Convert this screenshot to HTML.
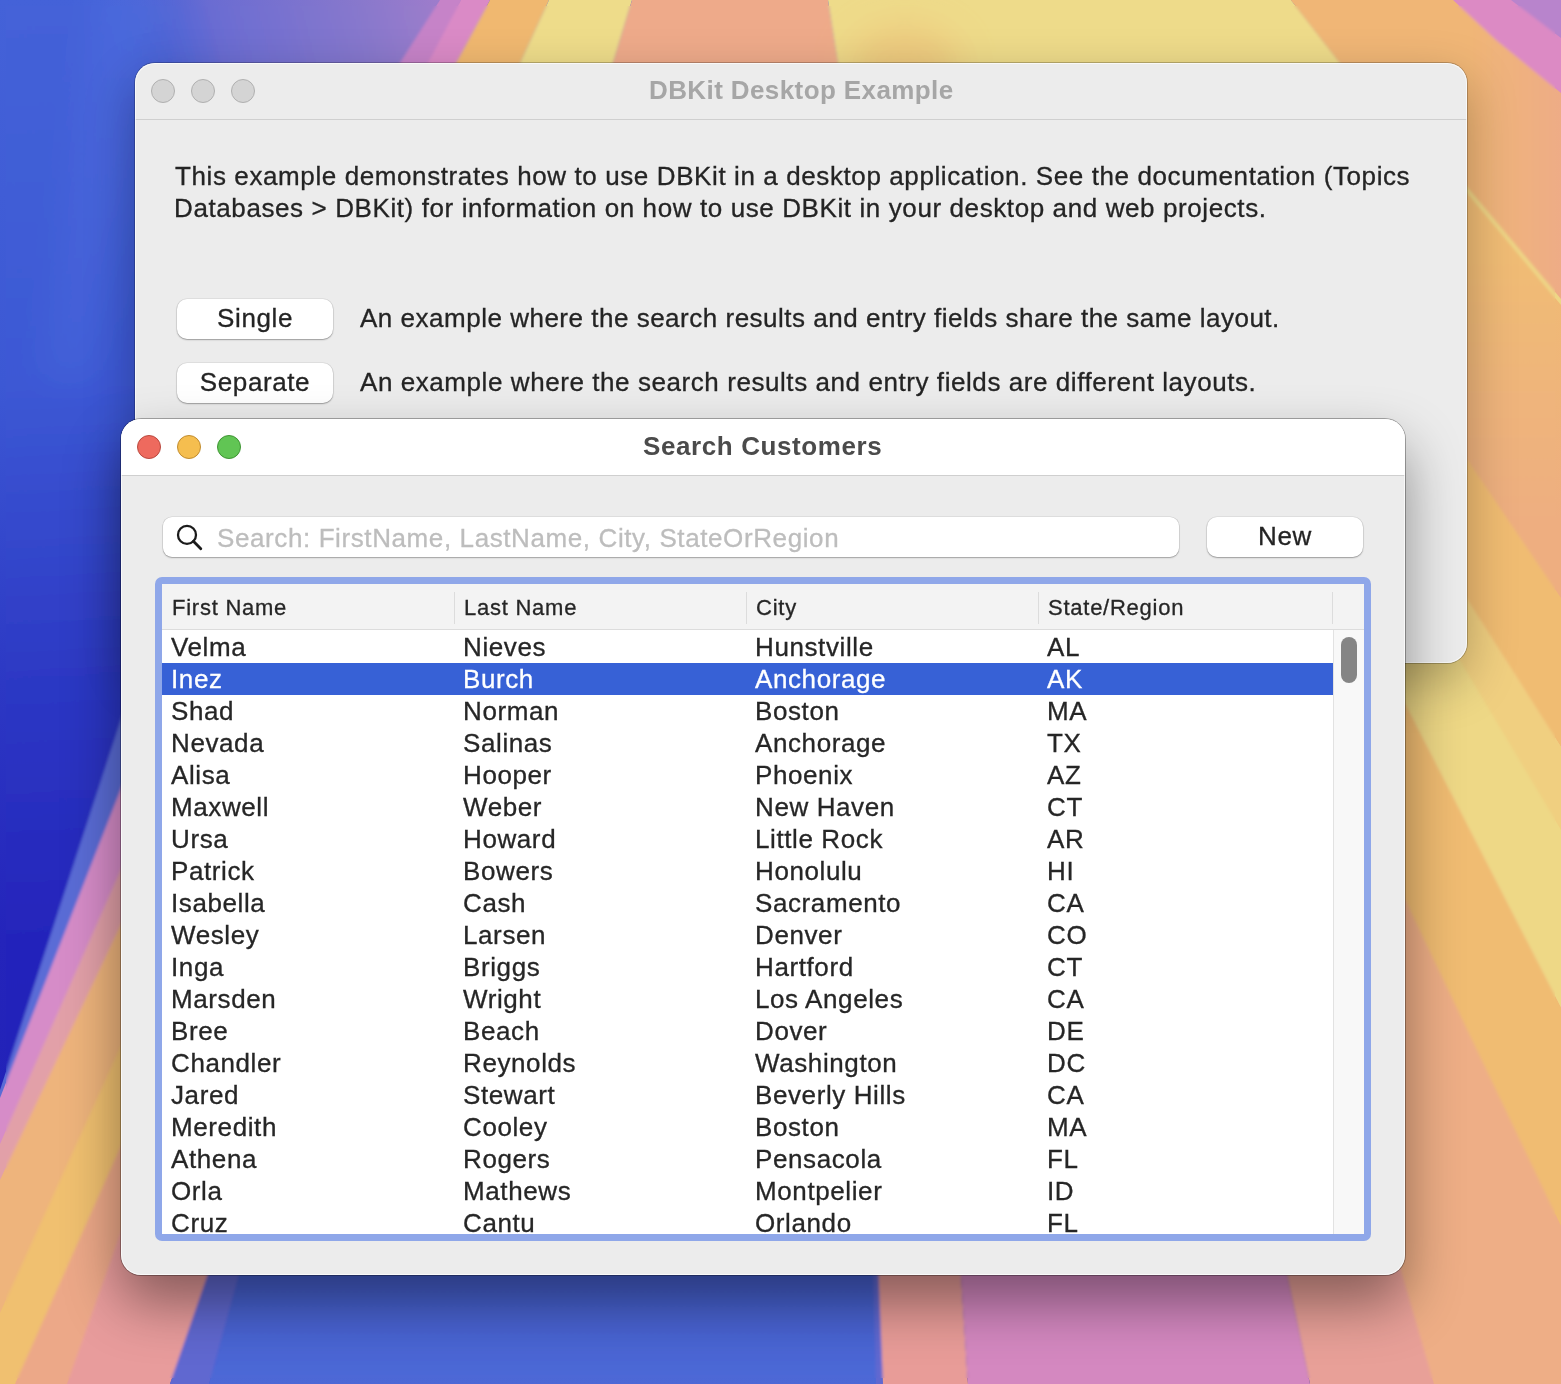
<!DOCTYPE html>
<html><head><meta charset="utf-8"><style>
html,body{margin:0;padding:0;}
body{width:1561px;height:1384px;overflow:hidden;position:relative;font-family:"Liberation Sans",sans-serif;}
.wall{position:absolute;left:0;top:0;}
.t{position:absolute;white-space:pre;will-change:transform;-webkit-text-stroke:0.3px currentColor;}
.win{position:absolute;border-radius:20px;background:#ececec;}
.back{box-shadow:0 0 0 1px rgba(0,0,0,0.22),0 18px 50px rgba(0,0,0,0.28);}
.front{background:#ececec;box-shadow:0 0 0 1px rgba(0,0,0,0.30),0 28px 56px rgba(0,0,0,0.42);overflow:hidden;}
.tbar{position:absolute;left:0;top:0;right:0;height:56px;background:#ffffff;}
.sep{position:absolute;left:0;right:0;height:1px;background:#cfcfcf;}
.tl{position:absolute;width:22px;height:22px;border-radius:50%;border:1px solid #b0b0b0;background:#d4d4d4;}
.btn{position:absolute;background:#ffffff;border-radius:10px;box-shadow:0 0 0 0.6px rgba(0,0,0,0.10),0 1px 1.5px rgba(0,0,0,0.30);}
.field{position:absolute;background:#ffffff;border-radius:9px;box-shadow:0 0 0 0.6px rgba(0,0,0,0.12),0 1px 1.5px rgba(0,0,0,0.28);}
.ring{position:absolute;border-radius:7px;background:#8fa7e9;}
.table{position:absolute;background:#ffffff;overflow:hidden;}
.hdr{position:absolute;left:0;top:0;right:0;height:45px;background:#f3f3f3;border-bottom:1px solid #dcdcdc;}
.csep{position:absolute;top:8px;width:1px;height:32px;background:#dcdcdc;}
.track{position:absolute;left:1171px;top:46px;width:31px;bottom:0;background:#f8f8f8;border-left:1px solid #e2e2e2;}
.thumb{position:absolute;left:1179px;top:53px;width:16px;height:46px;border-radius:8px;background:#858585;}
.selrow{position:absolute;left:0;width:1171px;height:32px;background:#3761d6;}
.clip{position:absolute;overflow:hidden;}
.rim{position:absolute;left:0;top:0;right:0;bottom:0;border-radius:20px;box-shadow:inset 0 0 0 1px rgba(255,255,255,0.7);}
</style></head>
<body>
<svg class="wall" width="1561" height="1384" viewBox="0 0 1561 1384"><defs><linearGradient id="gBlue" gradientUnits="userSpaceOnUse" x1="0" y1="0" x2="60" y2="1100"><stop offset="0" stop-color="#4462d8"/><stop offset="0.35" stop-color="#3c58d4"/><stop offset="0.62" stop-color="#2c38c4"/><stop offset="0.85" stop-color="#2424bb"/><stop offset="1" stop-color="#2222b8"/></linearGradient><linearGradient id="gPurp" gradientUnits="userSpaceOnUse" x1="120" y1="90" x2="470" y2="0"><stop offset="0" stop-color="#4a64d6" stop-opacity="0"/><stop offset="0.3" stop-color="#6a6cd2"/><stop offset="0.7" stop-color="#8878cc"/><stop offset="1" stop-color="#a67ecb"/></linearGradient><linearGradient id="gBot" gradientUnits="userSpaceOnUse" x1="0" y1="1275" x2="0" y2="1384"><stop offset="0" stop-color="#4560d0"/><stop offset="1" stop-color="#4d68d6"/></linearGradient><linearGradient id="gRS" gradientUnits="userSpaceOnUse" x1="1467" y1="0" x2="1561" y2="0"><stop offset="0" stop-color="#f0b676"/><stop offset="1" stop-color="#eeac86"/></linearGradient><linearGradient id="gRS2" gradientUnits="userSpaceOnUse" x1="0" y1="250" x2="0" y2="520"><stop offset="0" stop-color="#f0bc74"/><stop offset="1" stop-color="#eeae80"/></linearGradient><filter id="soft" x="-2%" y="-2%" width="104%" height="104%"><feGaussianBlur stdDeviation="1.6"/></filter><filter id="big" x="-50%" y="-50%" width="200%" height="200%"><feGaussianBlur stdDeviation="18"/></filter></defs><rect x="-40" y="-40" width="1641" height="1464" fill="url(#gBlue)"/><polygon points="100,0 480,0 400,110 135,110" fill="url(#gPurp)" />
<polygon points="440,0 461,0 406.8730158730159,110 370.1587301587302,110" fill="#c683c8" />
<polygon points="461,0 490,0 430.6349206349206,110 403.3809523809524,110" fill="#da8ac6" />
<polygon points="490,0 549,0 498.3650793650794,110 430.6349206349206,110" fill="#f0b870" />
<polygon points="549,0 632,0 598.8253968253969,110 498.3650793650794,110" fill="#eedc8a" />
<polygon points="632,0 828,0 845.4603174603175,110 598.8253968253969,110" fill="#eeaa8a" />
<polygon points="828,0 1291,0 1376.5555555555557,110 845.4603174603175,110" fill="#eedb8a" />
<ellipse cx="905" cy="66" rx="55" ry="40" fill="#ecc47a" opacity="0.8" filter="url(#big)"/><polygon points="95,-20 160,-20 95,380 40,380" fill="#6080e8" opacity="0.2" filter="url(#big)"/><polygon points="1291,0 1453,0 1568.2380952380952,110 1376.5555555555557,110" fill="#f0b874" />
<polygon points="1400,0 1561,0 1561,1384 1400,1384" fill="#eeae86" />
<polygon points="1291,0 1561,0 1561,302 1400,110 1340,63" fill="url(#gRS)" />
<polygon points="1453,0 1600,0 1600,125 1561,93 1496,40" fill="#dc8ac4" />
<polygon points="1511,0 1600,0 1600,60 1561,38" fill="#b884cc" />
<polygon points="1400,110 1561,302 1561,598 1400,360" fill="url(#gRS2)" />
<polygon points="1400,107 1561,299 1561,305 1400,113" fill="#eed686" />
<polygon points="1400,360 1561,598 1561,747 1400,494" fill="#f0bc72" />
<polygon points="1400,494 1561,747 1561,1008 1400,694" fill="#eed886" />
<polygon points="1400,494 1561,747 1561,830 1400,560" fill="#f0cf80" />
<polygon points="1400,694 1561,1008 1561,1226 1400,889" fill="#f0bc72" />
<polygon points="1400,1260 1435,1384 1400,1384" fill="#e8a098" />
<polygon points="243,1260 880,1260 883,1384 209,1384" fill="url(#gBot)" />
<polygon points="213,1260 243,1260 209,1384 170,1384" fill="#6068d0" />
<polygon points="873,1260 880,1260 883,1384 876,1384" fill="#6068d0" />
<polygon points="878,1260 960,1260 968,1384 883,1384" fill="#e89c98" />
<polygon points="960,1260 1284,1260 1310,1384 968,1384" fill="#d488c0" />
<polygon points="1284,1260 1398,1260 1434,1384 1310,1384" fill="#e8a098" />
<polygon points="1398,1260 1561,1260 1561,1384 1434,1384" fill="#eeae86" />
<polygon points="140,661 140,1384 0,1384 0,1090" fill="#5a6cd6" />
<polygon points="140,740 140,1384 0,1384 0,1098" fill="#d68cc8" />
<polygon points="140,826 140,1384 0,1384 0,1144" fill="#e2a0a8" />
<polygon points="140,884 140,1384 0,1384 0,1180" fill="#eeb47c" />
<polygon points="140,1004 140,1384 0,1384 0,1313" fill="#f0c070" />
<polygon points="140,1103 140,1384 15,1384" fill="#eca888" />
<polygon points="150,1150 251,1150 170,1384 67,1384" fill="#e89c9c" />
<polygon points="213,1260 243,1260 209,1384 170,1384" fill="#6068d0" />
<polygon points="243,1260 300,1260 300,1384 209,1384" fill="url(#gBot)" />
<clipPath id="inset"><rect x="6" y="6" width="1549" height="1372"/></clipPath><g clip-path="url(#inset)"><g filter="url(#soft)"><rect x="-40" y="-40" width="1641" height="1464" fill="url(#gBlue)"/><polygon points="100,0 480,0 400,110 135,110" fill="url(#gPurp)" />
<polygon points="440,0 461,0 406.8730158730159,110 370.1587301587302,110" fill="#c683c8" />
<polygon points="461,0 490,0 430.6349206349206,110 403.3809523809524,110" fill="#da8ac6" />
<polygon points="490,0 549,0 498.3650793650794,110 430.6349206349206,110" fill="#f0b870" />
<polygon points="549,0 632,0 598.8253968253969,110 498.3650793650794,110" fill="#eedc8a" />
<polygon points="632,0 828,0 845.4603174603175,110 598.8253968253969,110" fill="#eeaa8a" />
<polygon points="828,0 1291,0 1376.5555555555557,110 845.4603174603175,110" fill="#eedb8a" />
<ellipse cx="905" cy="66" rx="55" ry="40" fill="#ecc47a" opacity="0.8" filter="url(#big)"/><polygon points="95,-20 160,-20 95,380 40,380" fill="#6080e8" opacity="0.2" filter="url(#big)"/><polygon points="1291,0 1453,0 1568.2380952380952,110 1376.5555555555557,110" fill="#f0b874" />
<polygon points="1400,0 1561,0 1561,1384 1400,1384" fill="#eeae86" />
<polygon points="1291,0 1561,0 1561,302 1400,110 1340,63" fill="url(#gRS)" />
<polygon points="1453,0 1600,0 1600,125 1561,93 1496,40" fill="#dc8ac4" />
<polygon points="1511,0 1600,0 1600,60 1561,38" fill="#b884cc" />
<polygon points="1400,110 1561,302 1561,598 1400,360" fill="url(#gRS2)" />
<polygon points="1400,107 1561,299 1561,305 1400,113" fill="#eed686" />
<polygon points="1400,360 1561,598 1561,747 1400,494" fill="#f0bc72" />
<polygon points="1400,494 1561,747 1561,1008 1400,694" fill="#eed886" />
<polygon points="1400,494 1561,747 1561,830 1400,560" fill="#f0cf80" />
<polygon points="1400,694 1561,1008 1561,1226 1400,889" fill="#f0bc72" />
<polygon points="1400,1260 1435,1384 1400,1384" fill="#e8a098" />
<polygon points="243,1260 880,1260 883,1384 209,1384" fill="url(#gBot)" />
<polygon points="213,1260 243,1260 209,1384 170,1384" fill="#6068d0" />
<polygon points="873,1260 880,1260 883,1384 876,1384" fill="#6068d0" />
<polygon points="878,1260 960,1260 968,1384 883,1384" fill="#e89c98" />
<polygon points="960,1260 1284,1260 1310,1384 968,1384" fill="#d488c0" />
<polygon points="1284,1260 1398,1260 1434,1384 1310,1384" fill="#e8a098" />
<polygon points="1398,1260 1561,1260 1561,1384 1434,1384" fill="#eeae86" />
<polygon points="140,661 140,1384 0,1384 0,1090" fill="#5a6cd6" />
<polygon points="140,740 140,1384 0,1384 0,1098" fill="#d68cc8" />
<polygon points="140,826 140,1384 0,1384 0,1144" fill="#e2a0a8" />
<polygon points="140,884 140,1384 0,1384 0,1180" fill="#eeb47c" />
<polygon points="140,1004 140,1384 0,1384 0,1313" fill="#f0c070" />
<polygon points="140,1103 140,1384 15,1384" fill="#eca888" />
<polygon points="150,1150 251,1150 170,1384 67,1384" fill="#e89c9c" />
<polygon points="213,1260 243,1260 209,1384 170,1384" fill="#6068d0" />
<polygon points="243,1260 300,1260 300,1384 209,1384" fill="url(#gBot)" />
</g></g></svg>
<div class="win back" style="left:135px;top:63px;width:1332px;height:600px;"><div class="sep" style="top:56px"></div><div class="tl gray" style="left:16px;top:16px"></div><div class="tl gray" style="left:56px;top:16px"></div><div class="tl gray" style="left:96px;top:16px"></div><div class="rim"></div></div>
<div class="btn" style="left:177px;top:299px;width:156px;height:40px"></div><div class="btn" style="left:177px;top:363px;width:156px;height:40px"></div>
<div class="t" style="left:649px;top:73.69px;font-size:26px;line-height:32px;color:#a6a6a6;font-weight:700;letter-spacing:0.4px;-webkit-text-stroke:0;">DBKit Desktop Example</div>
<div class="t" style="left:175px;top:159.59px;font-size:26px;line-height:32px;color:#242424;font-weight:400;letter-spacing:0.6px;">This example demonstrates how to use DBKit in a desktop application. See the documentation (Topics</div>
<div class="t" style="left:174px;top:191.59px;font-size:26px;line-height:32px;color:#242424;font-weight:400;letter-spacing:0.6px;">Databases &gt; DBKit) for information on how to use DBKit in your desktop and web projects.</div>
<div class="t" style="left:177px;width:156px;text-align:center;top:301.99px;font-size:26px;line-height:32px;color:#242424;font-weight:400;letter-spacing:0.6px;">Single</div>
<div class="t" style="left:177px;width:156px;text-align:center;top:365.99px;font-size:26px;line-height:32px;color:#242424;font-weight:400;letter-spacing:0.6px;">Separate</div>
<div class="t" style="left:360px;top:301.99px;font-size:26px;line-height:32px;color:#242424;font-weight:400;letter-spacing:0.51px;">An example where the search results and entry fields share the same layout.</div>
<div class="t" style="left:360px;top:365.99px;font-size:26px;line-height:32px;color:#242424;font-weight:400;letter-spacing:0.57px;">An example where the search results and entry fields are different layouts.</div>

<div class="win front" style="left:121px;top:419px;width:1284px;height:856px;"><div class="tbar"></div><div class="sep" style="top:56px"></div><div class="tl" style="left:16px;top:16px;background:#ee6a5e;border-color:#b8493f"></div><div class="tl" style="left:56px;top:16px;background:#f5be4f;border-color:#c08c30"></div><div class="tl" style="left:96px;top:16px;background:#61c554;border-color:#3f9434"></div><div class="rim"></div></div>
<div class="t" style="left:643px;top:429.99px;font-size:26px;line-height:32px;color:#4b4b4b;font-weight:700;letter-spacing:0.6px;-webkit-text-stroke:0;">Search Customers</div>
<div class="field" style="left:163px;top:517px;width:1016px;height:40px"></div><svg style="position:absolute;left:170px;top:520px" width="40" height="36" viewBox="0 0 40 36"><circle cx="17" cy="14.9" r="9" fill="none" stroke="#1b1b1b" stroke-width="2.3"/><line x1="23.4" y1="21.3" x2="30.8" y2="28.8" stroke="#1b1b1b" stroke-width="2.8" stroke-linecap="round"/></svg><div class="t" style="left:217px;top:521.99px;font-size:26px;line-height:32px;color:#bdbdbd;font-weight:400;letter-spacing:0.6px;">Search: FirstName, LastName, City, StateOrRegion</div>
<div class="btn" style="left:1207px;top:517px;width:156px;height:40px"></div><div class="t" style="left:1207px;width:156px;text-align:center;top:519.99px;font-size:26px;line-height:32px;color:#242424;font-weight:400;letter-spacing:0.6px;">New</div>
<div class="ring" style="left:155px;top:577px;width:1216px;height:664px"></div><div class="table" style="left:162px;top:584px;width:1202px;height:650px"><div class="hdr"></div><div class="csep" style="left:292px"></div><div class="csep" style="left:584px"></div><div class="csep" style="left:876px"></div><div class="csep" style="left:1170px"></div><div class="track"></div><div class="thumb"></div><div class="selrow" style="top:79px"></div></div><div class="t" style="left:172px;top:591.88px;font-size:22px;line-height:32px;color:#262626;font-weight:400;letter-spacing:0.75px;">First Name</div>
<div class="t" style="left:464px;top:591.88px;font-size:22px;line-height:32px;color:#262626;font-weight:400;letter-spacing:0.75px;">Last Name</div>
<div class="t" style="left:756px;top:591.88px;font-size:22px;line-height:32px;color:#262626;font-weight:400;letter-spacing:0.75px;">City</div>
<div class="t" style="left:1048px;top:591.88px;font-size:22px;line-height:32px;color:#262626;font-weight:400;letter-spacing:0.75px;">State/Region</div>
<div class="clip" style="left:162px;top:630px;width:1171px;height:604px"><div class="t" style="left:9px;top:1.49px;font-size:26px;line-height:32px;color:#262626;font-weight:400;letter-spacing:0.6px;">Velma</div>
<div class="t" style="left:301px;top:1.49px;font-size:26px;line-height:32px;color:#262626;font-weight:400;letter-spacing:0.6px;">Nieves</div>
<div class="t" style="left:593px;top:1.49px;font-size:26px;line-height:32px;color:#262626;font-weight:400;letter-spacing:0.6px;">Hunstville</div>
<div class="t" style="left:885px;top:1.49px;font-size:26px;line-height:32px;color:#262626;font-weight:400;letter-spacing:0.6px;">AL</div>
<div class="t" style="left:9px;top:33.49px;font-size:26px;line-height:32px;color:#ffffff;font-weight:400;letter-spacing:0.6px;">Inez</div>
<div class="t" style="left:301px;top:33.49px;font-size:26px;line-height:32px;color:#ffffff;font-weight:400;letter-spacing:0.6px;">Burch</div>
<div class="t" style="left:593px;top:33.49px;font-size:26px;line-height:32px;color:#ffffff;font-weight:400;letter-spacing:0.6px;">Anchorage</div>
<div class="t" style="left:885px;top:33.49px;font-size:26px;line-height:32px;color:#ffffff;font-weight:400;letter-spacing:0.6px;">AK</div>
<div class="t" style="left:9px;top:65.49px;font-size:26px;line-height:32px;color:#262626;font-weight:400;letter-spacing:0.6px;">Shad</div>
<div class="t" style="left:301px;top:65.49px;font-size:26px;line-height:32px;color:#262626;font-weight:400;letter-spacing:0.6px;">Norman</div>
<div class="t" style="left:593px;top:65.49px;font-size:26px;line-height:32px;color:#262626;font-weight:400;letter-spacing:0.6px;">Boston</div>
<div class="t" style="left:885px;top:65.49px;font-size:26px;line-height:32px;color:#262626;font-weight:400;letter-spacing:0.6px;">MA</div>
<div class="t" style="left:9px;top:97.49px;font-size:26px;line-height:32px;color:#262626;font-weight:400;letter-spacing:0.6px;">Nevada</div>
<div class="t" style="left:301px;top:97.49px;font-size:26px;line-height:32px;color:#262626;font-weight:400;letter-spacing:0.6px;">Salinas</div>
<div class="t" style="left:593px;top:97.49px;font-size:26px;line-height:32px;color:#262626;font-weight:400;letter-spacing:0.6px;">Anchorage</div>
<div class="t" style="left:885px;top:97.49px;font-size:26px;line-height:32px;color:#262626;font-weight:400;letter-spacing:0.6px;">TX</div>
<div class="t" style="left:9px;top:129.49px;font-size:26px;line-height:32px;color:#262626;font-weight:400;letter-spacing:0.6px;">Alisa</div>
<div class="t" style="left:301px;top:129.49px;font-size:26px;line-height:32px;color:#262626;font-weight:400;letter-spacing:0.6px;">Hooper</div>
<div class="t" style="left:593px;top:129.49px;font-size:26px;line-height:32px;color:#262626;font-weight:400;letter-spacing:0.6px;">Phoenix</div>
<div class="t" style="left:885px;top:129.49px;font-size:26px;line-height:32px;color:#262626;font-weight:400;letter-spacing:0.6px;">AZ</div>
<div class="t" style="left:9px;top:161.49px;font-size:26px;line-height:32px;color:#262626;font-weight:400;letter-spacing:0.6px;">Maxwell</div>
<div class="t" style="left:301px;top:161.49px;font-size:26px;line-height:32px;color:#262626;font-weight:400;letter-spacing:0.6px;">Weber</div>
<div class="t" style="left:593px;top:161.49px;font-size:26px;line-height:32px;color:#262626;font-weight:400;letter-spacing:0.6px;">New Haven</div>
<div class="t" style="left:885px;top:161.49px;font-size:26px;line-height:32px;color:#262626;font-weight:400;letter-spacing:0.6px;">CT</div>
<div class="t" style="left:9px;top:193.49px;font-size:26px;line-height:32px;color:#262626;font-weight:400;letter-spacing:0.6px;">Ursa</div>
<div class="t" style="left:301px;top:193.49px;font-size:26px;line-height:32px;color:#262626;font-weight:400;letter-spacing:0.6px;">Howard</div>
<div class="t" style="left:593px;top:193.49px;font-size:26px;line-height:32px;color:#262626;font-weight:400;letter-spacing:0.6px;">Little Rock</div>
<div class="t" style="left:885px;top:193.49px;font-size:26px;line-height:32px;color:#262626;font-weight:400;letter-spacing:0.6px;">AR</div>
<div class="t" style="left:9px;top:225.49px;font-size:26px;line-height:32px;color:#262626;font-weight:400;letter-spacing:0.6px;">Patrick</div>
<div class="t" style="left:301px;top:225.49px;font-size:26px;line-height:32px;color:#262626;font-weight:400;letter-spacing:0.6px;">Bowers</div>
<div class="t" style="left:593px;top:225.49px;font-size:26px;line-height:32px;color:#262626;font-weight:400;letter-spacing:0.6px;">Honolulu</div>
<div class="t" style="left:885px;top:225.49px;font-size:26px;line-height:32px;color:#262626;font-weight:400;letter-spacing:0.6px;">HI</div>
<div class="t" style="left:9px;top:257.49px;font-size:26px;line-height:32px;color:#262626;font-weight:400;letter-spacing:0.6px;">Isabella</div>
<div class="t" style="left:301px;top:257.49px;font-size:26px;line-height:32px;color:#262626;font-weight:400;letter-spacing:0.6px;">Cash</div>
<div class="t" style="left:593px;top:257.49px;font-size:26px;line-height:32px;color:#262626;font-weight:400;letter-spacing:0.6px;">Sacramento</div>
<div class="t" style="left:885px;top:257.49px;font-size:26px;line-height:32px;color:#262626;font-weight:400;letter-spacing:0.6px;">CA</div>
<div class="t" style="left:9px;top:289.49px;font-size:26px;line-height:32px;color:#262626;font-weight:400;letter-spacing:0.6px;">Wesley</div>
<div class="t" style="left:301px;top:289.49px;font-size:26px;line-height:32px;color:#262626;font-weight:400;letter-spacing:0.6px;">Larsen</div>
<div class="t" style="left:593px;top:289.49px;font-size:26px;line-height:32px;color:#262626;font-weight:400;letter-spacing:0.6px;">Denver</div>
<div class="t" style="left:885px;top:289.49px;font-size:26px;line-height:32px;color:#262626;font-weight:400;letter-spacing:0.6px;">CO</div>
<div class="t" style="left:9px;top:321.49px;font-size:26px;line-height:32px;color:#262626;font-weight:400;letter-spacing:0.6px;">Inga</div>
<div class="t" style="left:301px;top:321.49px;font-size:26px;line-height:32px;color:#262626;font-weight:400;letter-spacing:0.6px;">Briggs</div>
<div class="t" style="left:593px;top:321.49px;font-size:26px;line-height:32px;color:#262626;font-weight:400;letter-spacing:0.6px;">Hartford</div>
<div class="t" style="left:885px;top:321.49px;font-size:26px;line-height:32px;color:#262626;font-weight:400;letter-spacing:0.6px;">CT</div>
<div class="t" style="left:9px;top:353.49px;font-size:26px;line-height:32px;color:#262626;font-weight:400;letter-spacing:0.6px;">Marsden</div>
<div class="t" style="left:301px;top:353.49px;font-size:26px;line-height:32px;color:#262626;font-weight:400;letter-spacing:0.6px;">Wright</div>
<div class="t" style="left:593px;top:353.49px;font-size:26px;line-height:32px;color:#262626;font-weight:400;letter-spacing:0.6px;">Los Angeles</div>
<div class="t" style="left:885px;top:353.49px;font-size:26px;line-height:32px;color:#262626;font-weight:400;letter-spacing:0.6px;">CA</div>
<div class="t" style="left:9px;top:385.49px;font-size:26px;line-height:32px;color:#262626;font-weight:400;letter-spacing:0.6px;">Bree</div>
<div class="t" style="left:301px;top:385.49px;font-size:26px;line-height:32px;color:#262626;font-weight:400;letter-spacing:0.6px;">Beach</div>
<div class="t" style="left:593px;top:385.49px;font-size:26px;line-height:32px;color:#262626;font-weight:400;letter-spacing:0.6px;">Dover</div>
<div class="t" style="left:885px;top:385.49px;font-size:26px;line-height:32px;color:#262626;font-weight:400;letter-spacing:0.6px;">DE</div>
<div class="t" style="left:9px;top:417.49px;font-size:26px;line-height:32px;color:#262626;font-weight:400;letter-spacing:0.6px;">Chandler</div>
<div class="t" style="left:301px;top:417.49px;font-size:26px;line-height:32px;color:#262626;font-weight:400;letter-spacing:0.6px;">Reynolds</div>
<div class="t" style="left:593px;top:417.49px;font-size:26px;line-height:32px;color:#262626;font-weight:400;letter-spacing:0.6px;">Washington</div>
<div class="t" style="left:885px;top:417.49px;font-size:26px;line-height:32px;color:#262626;font-weight:400;letter-spacing:0.6px;">DC</div>
<div class="t" style="left:9px;top:449.49px;font-size:26px;line-height:32px;color:#262626;font-weight:400;letter-spacing:0.6px;">Jared</div>
<div class="t" style="left:301px;top:449.49px;font-size:26px;line-height:32px;color:#262626;font-weight:400;letter-spacing:0.6px;">Stewart</div>
<div class="t" style="left:593px;top:449.49px;font-size:26px;line-height:32px;color:#262626;font-weight:400;letter-spacing:0.6px;">Beverly Hills</div>
<div class="t" style="left:885px;top:449.49px;font-size:26px;line-height:32px;color:#262626;font-weight:400;letter-spacing:0.6px;">CA</div>
<div class="t" style="left:9px;top:481.49px;font-size:26px;line-height:32px;color:#262626;font-weight:400;letter-spacing:0.6px;">Meredith</div>
<div class="t" style="left:301px;top:481.49px;font-size:26px;line-height:32px;color:#262626;font-weight:400;letter-spacing:0.6px;">Cooley</div>
<div class="t" style="left:593px;top:481.49px;font-size:26px;line-height:32px;color:#262626;font-weight:400;letter-spacing:0.6px;">Boston</div>
<div class="t" style="left:885px;top:481.49px;font-size:26px;line-height:32px;color:#262626;font-weight:400;letter-spacing:0.6px;">MA</div>
<div class="t" style="left:9px;top:513.49px;font-size:26px;line-height:32px;color:#262626;font-weight:400;letter-spacing:0.6px;">Athena</div>
<div class="t" style="left:301px;top:513.49px;font-size:26px;line-height:32px;color:#262626;font-weight:400;letter-spacing:0.6px;">Rogers</div>
<div class="t" style="left:593px;top:513.49px;font-size:26px;line-height:32px;color:#262626;font-weight:400;letter-spacing:0.6px;">Pensacola</div>
<div class="t" style="left:885px;top:513.49px;font-size:26px;line-height:32px;color:#262626;font-weight:400;letter-spacing:0.6px;">FL</div>
<div class="t" style="left:9px;top:545.49px;font-size:26px;line-height:32px;color:#262626;font-weight:400;letter-spacing:0.6px;">Orla</div>
<div class="t" style="left:301px;top:545.49px;font-size:26px;line-height:32px;color:#262626;font-weight:400;letter-spacing:0.6px;">Mathews</div>
<div class="t" style="left:593px;top:545.49px;font-size:26px;line-height:32px;color:#262626;font-weight:400;letter-spacing:0.6px;">Montpelier</div>
<div class="t" style="left:885px;top:545.49px;font-size:26px;line-height:32px;color:#262626;font-weight:400;letter-spacing:0.6px;">ID</div>
<div class="t" style="left:9px;top:577.49px;font-size:26px;line-height:32px;color:#262626;font-weight:400;letter-spacing:0.6px;">Cruz</div>
<div class="t" style="left:301px;top:577.49px;font-size:26px;line-height:32px;color:#262626;font-weight:400;letter-spacing:0.6px;">Cantu</div>
<div class="t" style="left:593px;top:577.49px;font-size:26px;line-height:32px;color:#262626;font-weight:400;letter-spacing:0.6px;">Orlando</div>
<div class="t" style="left:885px;top:577.49px;font-size:26px;line-height:32px;color:#262626;font-weight:400;letter-spacing:0.6px;">FL</div>
</div>
</body></html>
